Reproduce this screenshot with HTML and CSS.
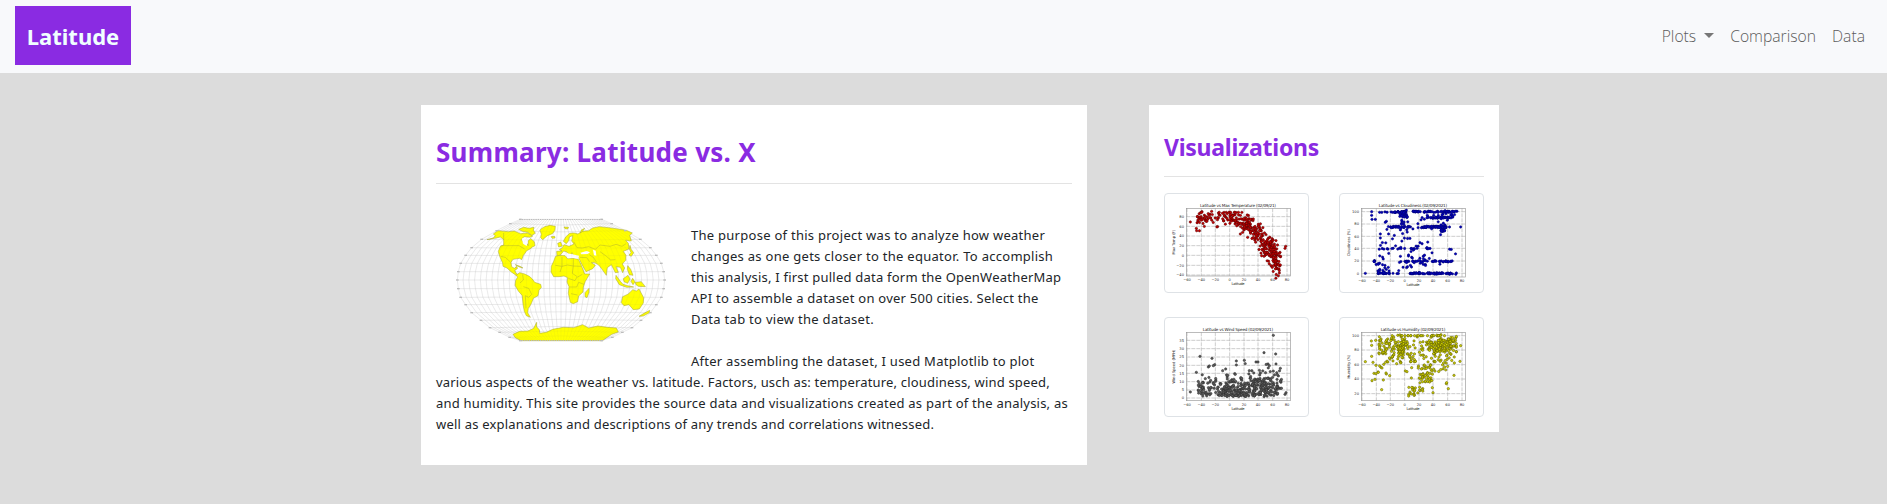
FILE: index.html
```html
<!DOCTYPE html>
<html lang="en">
<head>
<meta charset="utf-8">
<title>Latitude</title>
<link rel="stylesheet" href="styles.css">
</head>
<body>
<nav class="navbar">
  <a class="brand">Latitude</a>
  <div class="links"><a class="plots">Plots<i class="caret"></i></a><a class="comparison">Comparison</a><a class="data">Data</a></div>
</nav>
<main class="content">
  <section class="card summary">
    <h1>Summary: Latitude vs. X</h1>
    <hr>
    <div class="article">
      <svg class="map" viewBox="0 0 720 435">
        <g id="grid" fill="none" stroke="#dedede" stroke-width="1.3"></g>
        <g fill="#ffff00" stroke="#a8a838" stroke-width="1.6" stroke-linejoin="round">
          <path d="M141 104L160 99L166 92L160 87L173 77L205 80L222 78L242 86L262 84L278 93L270 97L252 95L244 104L250 111L258 112L265 122L264 108L272 101L283 110L285 122L277 126L270 132L260 137L255 145L250 151L245 164L239 160L219 163L213 172L215 185L223 190L231 184L232 191L224 196L228 204L236 211L230 212L214 201L201 189L189 184L188 174L179 154L175 139L181 124L191 120L191 104L181 96L164 100Z"/>
          <path d="M236 73L251 67L267 70L282 67L280 75L286 85L275 91L263 82L247 79Z"/>
          <path d="M304 71L314 65L330 61L346 64L345 76L337 86L322 92L308 104L302 98L304 88L300 76Z"/>
          <path d="M226 179L240 184L249 189L238 186ZM333 95L344 94L345 99L337 100ZM372 66L386 67L383 72L375 71Z"/>
          <path d="M228 211L239 203L254 207L268 214L277 222L284 232L302 238L304 247L297 256L294 272L280 280L275 293L270 303L265 310L263 323L271 337L259 332L253 319L249 298L247 272L235 258L225 241L227 226L233 216Z"/>
          <path d="M353 151L346 155L341 169L334 184L333 201L341 215L357 215L372 213L383 218L381 231L387 245L385 265L391 292L400 296L413 290L416 273L429 261L430 246L436 229L449 207L434 207L424 181L415 163L400 160L383 161L375 152Z"/>
          <path d="M435 263L447 250L447 262L441 278L435 275Z"/>
          <path d="M350 139L351 153L361 150L371 138L380 141L393 153L396 143L402 157L410 154L417 160L425 177L438 200L458 191L466 181L454 173L463 172L476 180L484 190L499 211L502 188L514 179L526 203L535 202L528 185L541 187L548 203L554 189L547 177L557 166L558 151L550 139L567 132L565 115L557 106L574 108L569 91L577 84L559 76L528 71L506 68L478 65L458 69L446 77L426 79L414 87L402 84L389 85L377 96L370 109L379 116L386 107L388 96L398 92L395 108L402 117L387 124L372 119L367 128L358 134L366 138Z"/>
          <path d="M353 115L362 111L367 123L356 126ZM421 84L424 75L434 70L427 80ZM570 121L573 133L581 143L574 154L567 150L573 143L568 132ZM563 182L572 193L579 211L568 209L562 193ZM528 211L541 229L549 238L563 242L581 246L560 247L538 239L527 221ZM550 221L564 211L570 222L563 235L552 230ZM578 220L585 231L579 239L573 229ZM586 232L604 230L616 245L595 244L588 239Z"/>
          <path d="M544 293L548 275L565 267L578 254L589 258L597 252L611 278L610 294L598 312L580 314L567 299L552 302ZM597 334L612 325L629 316L628 323L610 333Z"/>
          <path d="M219 388L239 379L264 378L281 370L290 352L290 366L298 374L299 385L319 382L338 373L370 367L401 368L428 359L446 369L474 363L503 367L529 369L535 381L515 388L487 407L243 407L226 398Z"/>
        </g>
        <path class="inland" d="M421 143L440 138L450 142L443 147L424 148ZM459 134L467 137L469 152L462 151ZM381 145L397 148L417 152L415 161L399 159L384 160L377 151ZM246 100L258 98L263 110L260 123L249 116Z"/>
        <path class="borders" d="M182 122L237 122L254 132M191 104L191 84M182 154L196 157L211 171M346 181L366 184L382 180L400 183L424 184M366 156L366 184L360 201M400 160L400 183L397 205L413 216L427 208M385 220L405 227L411 216M389 246L410 246L416 232L432 238M393 266L412 270M248 208L250 225L240 234M250 245L266 250L275 268L266 277L256 272M256 272L258 310M401 110L411 128L427 129L446 125L466 133L480 120L510 124L528 118L546 124L558 116M480 140L497 152L512 165L526 164M448 149L461 158L470 172M420 157L440 158L449 170"/>
        <g id="gridover" fill="none" stroke="#777" stroke-opacity=".16" stroke-width="1"></g>
        <g id="marks" fill="#bcbcbc"></g>
      </svg>
      <p><span class="l1">The purpose of this project was to analyze how weather</span><br><span class="l2">changes as one gets closer to the equator. To accomplish</span><br><span class="l3">this analysis, I first pulled data form the OpenWeatherMap</span><br><span class="l4">API to assemble a dataset on over 500 cities. Select the</span><br><span class="l5">Data tab to view the dataset.</span></p>
      <p><span class="l6">After assembling the dataset, I used Matplotlib to plot</span><br><span class="l7">various aspects of the weather vs. latitude. Factors, usch as: temperature, cloudiness, wind speed,</span><br><span class="l8">and humidity. This site provides the source data and visualizations created as part of the analysis, as</span><br><span class="l9">well as explanations and descriptions of any trends and correlations witnessed.</span></p>
    </div>
  </section>
  <section class="card visuals">
    <h2>Visualizations</h2>
    <hr>
    <div class="thumbs">
      <div class="thumb"><svg id="temp" viewBox="31 28 429 294"></svg></div>
      <div class="thumb"><svg id="cloud" viewBox="31 28 429 294"></svg></div>
      <div class="thumb"><svg id="wind" viewBox="31 25 429 294"></svg></div>
      <div class="thumb"><svg id="humid" viewBox="31 25 429 294"></svg></div>
    </div>
  </section>
</main>
<script src="plots.js"></script>
</body>
</html>
```
FILE: styles.css
```css
* { box-sizing: border-box; }
body { margin: 0; background: #dcdcdc; color: #212529; font-family: "Noto Sans", sans-serif; }
.navbar { height: 73px; background: #f8f9fb; display: flex; justify-content: space-between; align-items: flex-start; padding: 6px 22px 0 15px; }
.brand { width: 116px; height: 59px; background: #8a2be2; color: #f0ffff; font-weight: 700; font-size: 22px; line-height: 61px; text-align: center; white-space: nowrap; }
.links { display: flex; gap: 16px; font-family: "Open Sans", sans-serif; font-size: 15.7px; font-weight: 300; color: #5c5c5c; line-height: 24px; padding-top: 18px; }
.plots { display: flex; align-items: center; }
.caret { border: 5px solid transparent; border-top-color: #777; border-bottom: 0; margin: -2px 0 0 8px; }
.content { display: flex; align-items: flex-start; gap: 62px; padding: 32px 0 0 421px; }
.card { background: #fff; padding: 0 15px; }
.summary { width: 666px; height: 360px; }
.visuals { width: 350px; height: 327px; }
h1, h2 { margin: 0; color: #8a2be2; font-weight: 700; white-space: nowrap; }
h1 { font-size: 26px; line-height: 36px; padding-top: 29px; height: 78px; letter-spacing: .28px; }
h2 { font-size: 23px; line-height: 32px; padding-top: 26px; height: 71px; letter-spacing: -.26px; }
hr { border: 0; height: 1px; background: #e3e3e3; margin: 0; }
.article { padding-top: 41px; font-size: 13px; line-height: 21px; }
.article p { margin: 0 0 21px; white-space: nowrap; }
.l1 { letter-spacing: .27px; }
.l2 { letter-spacing: .28px; }
.l3 { letter-spacing: .22px; }
.l4 { letter-spacing: .25px; }
.l5 { letter-spacing: .29px; }
.l6 { letter-spacing: .26px; }
.l7 { letter-spacing: .18px; }
.l8 { letter-spacing: .22px; }
.l9 { letter-spacing: .2px; }
.map { float: left; width: 240px; height: 145px; margin: -20px 11px 10px 4px; display: block; }
.inland { fill: #fff; }
.borders { fill: none; stroke: #b5b52c; stroke-width: 1.5; }
.thumbs { display: grid; grid-template-columns: 145px 145px; grid-auto-rows: 100px; column-gap: 30px; row-gap: 24px; padding-top: 16px; }
.thumb { border: 1px solid #dee2e6; border-radius: 4px; }
.thumb svg { display: block; width: 143px; height: 98px; font-family: "DejaVu Sans", sans-serif; }
```
FILE: plots.js
```javascript
const NS = 'http://www.w3.org/2000/svg';
function add(parent, tag, attrs, text) {
  const e = document.createElementNS(NS, tag);
  for (const k in attrs) e.setAttribute(k, attrs[k]);
  if (text !== undefined) e.textContent = text;
  parent.appendChild(e);
  return e;
}

// World map graticule
const rows = [[43,122],[56,152],[77,193],[103,238],[128,268],[151,286],[175,301],[200,308],[225,311],[251,308],[277,301],[299,286],[323,268],[346,240],[368,213],[382,184],[397,154],[407,122]];
for (const id of ['grid', 'gridover']) {
  const g = document.getElementById(id);
  for (let k = -18; k <= 18; k++)
    add(g, 'polyline', {points: rows.map(([y, w]) => (363 + w * k / 18) + ',' + y).join(' ')});
  for (const [y, w] of rows) {
    const sag = (225 - y) / 182 * 9 * (y === 43 || y === 407 ? 0 : 1);
    add(g, 'path', {d: `M${363 - w} ${y}Q363 ${y + sag} ${363 + w} ${y}`});
  }
}
const marks = document.getElementById('marks');
for (const [y, w] of rows)
  for (const s of [-1, 1]) add(marks, 'rect', {x: 363 + s * w - 4, y: y - 2, width: 8, height: 4});
for (let k = -17; k < 18; k++)
  for (const y of [42, 405]) add(marks, 'rect', {x: 361 + 122 * k / 18, y, width: 4, height: 3});

// Scatter plots
let seed = 7;
const rnd = () => (seed = (seed * 16807) % 2147483647) / 2147483647;
const gauss = () => (rnd() + rnd() + rnd() - 1.5) / 0.5;
const U = (a, b) => a + rnd() * (b - a);

function frame(id, o) {
  const s = document.getElementById(id);
  const xs = [97, 140, 182, 225, 268, 310, 354, 397];
  xs.forEach((x, i) => {
    add(s, 'line', {x1: x, x2: x, y1: o.top, y2: o.bottom, stroke: '#b4b4b4', 'stroke-width': 2, 'stroke-dasharray': '12 3'});
    add(s, 'text', {x, y: o.bottom + 15, 'font-size': 11, 'text-anchor': 'middle', fill: '#333'}, String(i * 20 - 60).replace('-', '−'));
  });
  o.ys.forEach(([v, y]) => {
    add(s, 'line', {x1: 95, x2: 407, y1: y, y2: y, stroke: '#b4b4b4', 'stroke-width': 2, 'stroke-dasharray': '12 3'});
    add(s, 'text', {x: 88, y: y + 4, 'font-size': 11, 'text-anchor': 'end', fill: '#333'}, String(v).replace('-', '−'));
  });
  add(s, 'rect', {x: 95, y: o.top, width: 312, height: o.bottom - o.top, fill: 'none', stroke: '#999', 'stroke-width': 2});
  add(s, 'text', {x: 250, y: o.top - 5, 'font-size': 12.5, 'text-anchor': 'middle', fill: '#222', textLength: o.len}, o.title);
  add(s, 'text', {x: 250, y: o.bottom + 27, 'font-size': 11, 'text-anchor': 'middle', fill: '#222', textLength: 39}, 'Latitude');
  add(s, 'text', {transform: `translate(62 ${(o.top + o.bottom) / 2}) rotate(-90)`, 'font-size': 11, 'text-anchor': 'middle', fill: '#222'}, o.label);
  for (const [x, y] of o.points)
    add(s, 'circle', {cx: x, cy: y, r: 3.5, fill: o.fill, stroke: o.edge, 'stroke-width': 1.6});
}

const temp = [[107,112],[126,138],[125,131],[142,81],[171,80],[257,148],[264,143],[279,158],[393,185],[391,191],[374,265],[291,106]];
const curve = [[128,112],[150,105],[180,97],[215,97],[245,103],[270,110],[290,130],[310,148],[325,170],[345,195],[360,215],[375,243]];
for (let i = 0; i < 330; i++) {
  const t = Math.pow(rnd(), .8) * 10.99, k = Math.floor(t), f = t - k;
  const x = curve[k][0] + f * (curve[k + 1][0] - curve[k][0]);
  const y = curve[k][1] + f * (curve[k + 1][1] - curve[k][1]);
  temp.push([x + gauss() * 5, Math.max(83, y + gauss() * (k > 6 ? 20 : 12))]);
}
for (let i = 0; i < 30; i++) temp.push([U(330, 370), U(163, 210)]);
frame('temp', {title: 'Latitude vs Max Temperature (02/09/21)', len: 228, label: 'Max Temp (F)', top: 71, bottom: 274,
  ys: [[80,96],[60,125],[40,154],[20,183],[0,212],[-20,242],[-40,271]], points: temp, fill: '#cc0000', edge: '#550000'});

const cloud = [[107,266],[393,127],[126,81],[126,92],[127,104],[137,104],[152,148],[152,160]];
const band = (n, a, b, y, j = 1) => { for (let i = 0; i < n; i++) cloud.push([U(a, b), y + gauss() * j]); };
band(12,140,205,82); band(22,205,235,82); band(50,245,382,81); band(16,168,210,127); band(12,215,243,127);
band(46,274,352,127); band(34,290,362,99); band(18,145,210,266); band(50,240,340,266); band(14,340,383,266);
band(10,148,225,192); band(10,240,302,192); band(16,205,285,230); band(22,305,370,230); band(5,130,137,230);
band(18,210,232,92,7); band(18,325,375,93,7); band(9,215,235,118,9); band(20,331,347,128,9);
for (let i = 0; i < 70; i++) cloud.push([U(150, 378), U(90, 262)]);
for (let i = 0; i < 16; i++) cloud.push([U(138, 182), U(235, 266)]);
for (let i = 0; i < 18; i++) cloud.push([U(230, 300), U(200, 250)]);
frame('cloud', {title: 'Latitude vs Cloudiness (02/09/2021)', len: 205, label: 'Cloudiness (%)', top: 71, bottom: 277,
  ys: [[100,81],[80,118],[60,155],[40,191],[20,229],[0,266]], points: cloud, fill: '#0000c0', edge: '#00006e'});

const wind = [[107,247],[125,188],[136,140],[172,146],[161,172],[164,169],[180,165],[176,168],[245,154],[245,166],[269,152],[304,157],[310,157],[328,129],[363,133],[356,77],[364,163],[340,163],[344,168],[377,176],[394,249],[391,254],[213,178],[204,183]];
for (let i = 0; i < 310; i++) {
  const x = rnd() < .55 ? U(128, 382) : U(195, 375);
  wind.push([x, 261 - Math.abs(gauss()) * (x > 270 ? 44 : 34) * (.6 + rnd() * .5)]);
}
for (let i = 0; i < 90; i++) wind.push([U(125, 382), U(205, 259)]);
frame('wind', {title: 'Latitude vs Wind Speed (02/09/2021)', len: 211, label: 'Wind Speed (MPH)', top: 68, bottom: 273,
  ys: [[35,92],[30,117],[25,142],[20,167],[15,191],[10,216],[5,241],[0,265]], points: wind, fill: '#5c5c5c', edge: '#2c2c2c'});

const humid = [[107,156],[127,213],[136,209],[156,240],[161,211],[180,198],[170,193],[169,190],[154,173],[157,175],[150,169],[145,187],[146,188],[133,191],[139,192],[139,167],[126,140],[130,158],[125,94],[126,107],[138,92],[245,205],[246,174],[350,222],[351,219],[356,237],[310,249],[308,234],[373,197],[391,155],[393,108],[227,184],[232,186]];
for (let i = 0; i < 85; i++) humid.push([U(147, 220), 115 + gauss() * 22]);
for (let i = 0; i < 70; i++) humid.push([205 + Math.abs(gauss()) * 24, 118 + gauss() * 20]);
for (let i = 0; i < 125; i++) humid.push([Math.min(380, 340 + gauss() * 26), 106 + gauss() * 13]);
for (let i = 0; i < 75; i++) humid.push([U(268, 378), 122 + gauss() * 22]);
for (let i = 0; i < 44; i++) humid.push([U(265, 310), U(165, 220)]);
for (let i = 0; i < 14; i++) humid.push([U(305, 350), U(150, 195)]);
for (let i = 0; i < 22; i++) humid.push([U(235, 280), U(232, 260)]);
for (let i = 0; i < 24; i++) humid.push([U(180, 365), 78]);
for (let i = 0; i < 8; i++) humid.push([U(240, 270), U(140, 158)]);
frame('humid', {title: 'Latitude vs Humidity (02/09/2021)', len: 194, label: 'Humidity (%)', top: 68, bottom: 273,
  ys: [[100,78],[80,121],[60,165],[40,208],[20,252]], points: humid.filter(p => p[1] > 75), fill: '#d4d400', edge: '#555500'});
```
